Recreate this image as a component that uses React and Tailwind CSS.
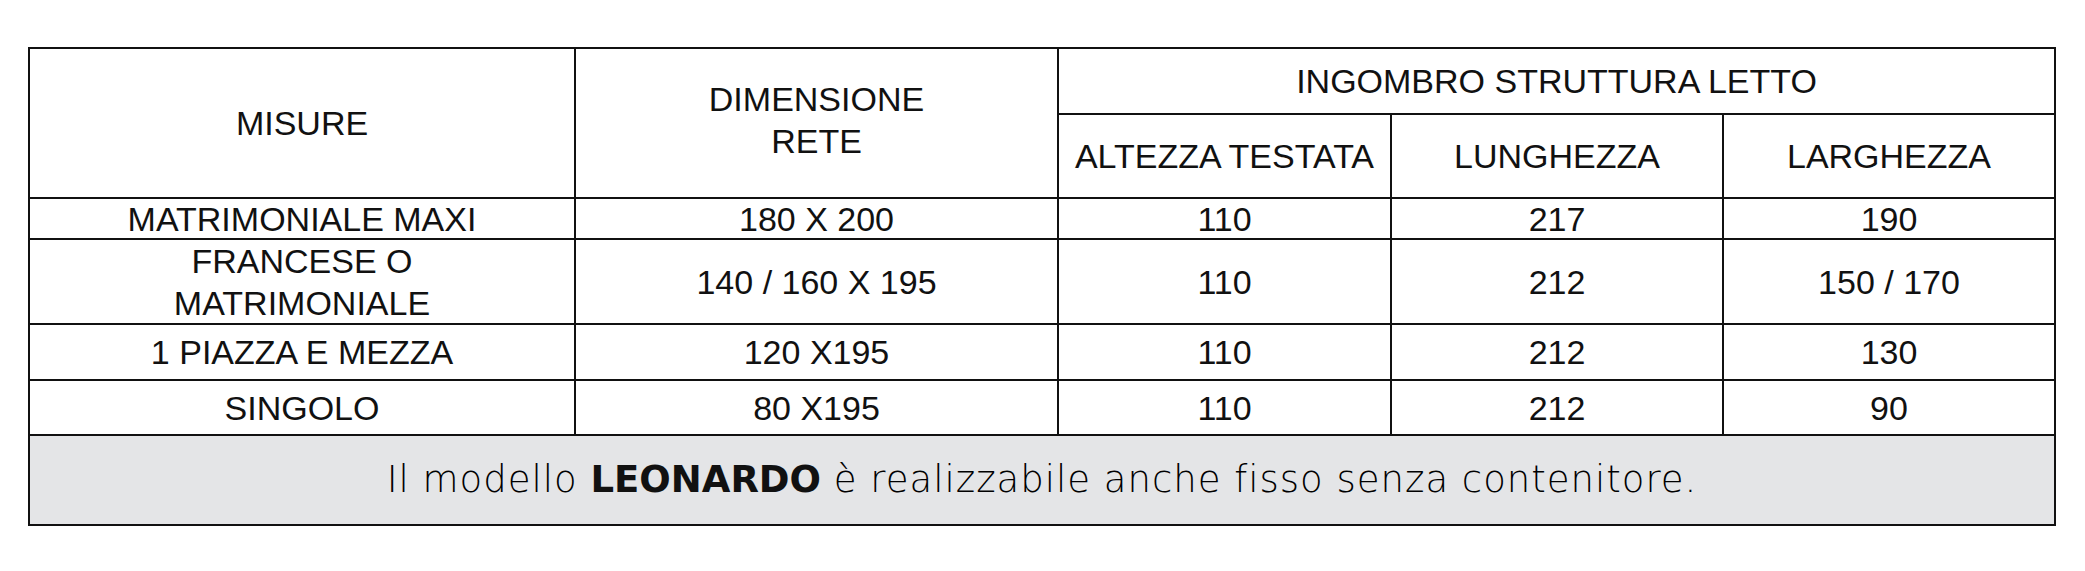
const rows = [
  { label: ["MATRIMONIALE MAXI"], rete: "180 X 200", alt: "110", lung: "217", larg: "190" },
  { label: ["FRANCESE O", "MATRIMONIALE"], rete: "140 / 160 X 195", alt: "110", lung: "212", larg: "150 / 170" },
  { label: ["1 PIAZZA E MEZZA"], rete: "120 X195", alt: "110", lung: "212", larg: "130" },
  { label: ["SINGOLO"], rete: "80 X195", alt: "110", lung: "212", larg: "90" },
];

function Cell({ children, last, bottom = true, className = "" }) {
  return (
    <div
      className={
        "flex flex-col items-center justify-center text-center border-[#111] " +
        (last ? "" : "border-r-2 ") +
        (bottom ? "border-b-2 " : "") +
        className
      }
    >
      {children}
    </div>
  );
}

export default function App() {
  return (
    <div className="min-h-[571px] w-[2085px] bg-white pl-[28px] pt-[47px]">
      <div
        className="w-[2028px] border-2 border-[#111] text-[#111]"
        style={{ fontFamily: '"Liberation Sans", Arial, sans-serif' }}
      >
        <div className="grid grid-cols-[546px_483px_333px_332px_1fr] grid-rows-[66px_84px_41px_85px_56px_53px] text-[34px] leading-[42px]">
          <Cell className="row-span-2">MISURE</Cell>
          <Cell className="row-span-2 pb-[6px]">
            <span>DIMENSIONE</span>
            <span>RETE</span>
          </Cell>
          <Cell className="col-span-3" last>
            INGOMBRO STRUTTURA LETTO
          </Cell>
          <Cell>ALTEZZA TESTATA</Cell>
          <Cell>LUNGHEZZA</Cell>
          <Cell last>LARGHEZZA</Cell>

          {rows.map((r, i) => {
            const bottom = i < rows.length - 1;
            return [
              <Cell key={i + "a"} bottom={bottom}>
                {r.label.map((l) => (
                  <span key={l}>{l}</span>
                ))}
              </Cell>,
              <Cell key={i + "b"} bottom={bottom}>{r.rete}</Cell>,
              <Cell key={i + "c"} bottom={bottom}>{r.alt}</Cell>,
              <Cell key={i + "d"} bottom={bottom}>{r.lung}</Cell>,
              <Cell key={i + "e"} bottom={bottom} last>{r.larg}</Cell>,
            ];
          })}
        </div>

        <div
          className="flex h-[90px] items-center justify-center border-t-2 border-[#111] bg-[#e4e5e7] text-[37px] font-light tracking-[1px] text-black"
          style={{ fontFamily: '"DejaVu Sans", sans-serif' }}
        >
          <span>
            Il modello <b className="font-bold tracking-[0px] text-[#111]">LEONARDO</b> è realizzabile anche fisso senza contenitore.
          </span>
        </div>
      </div>
    </div>
  );
}
